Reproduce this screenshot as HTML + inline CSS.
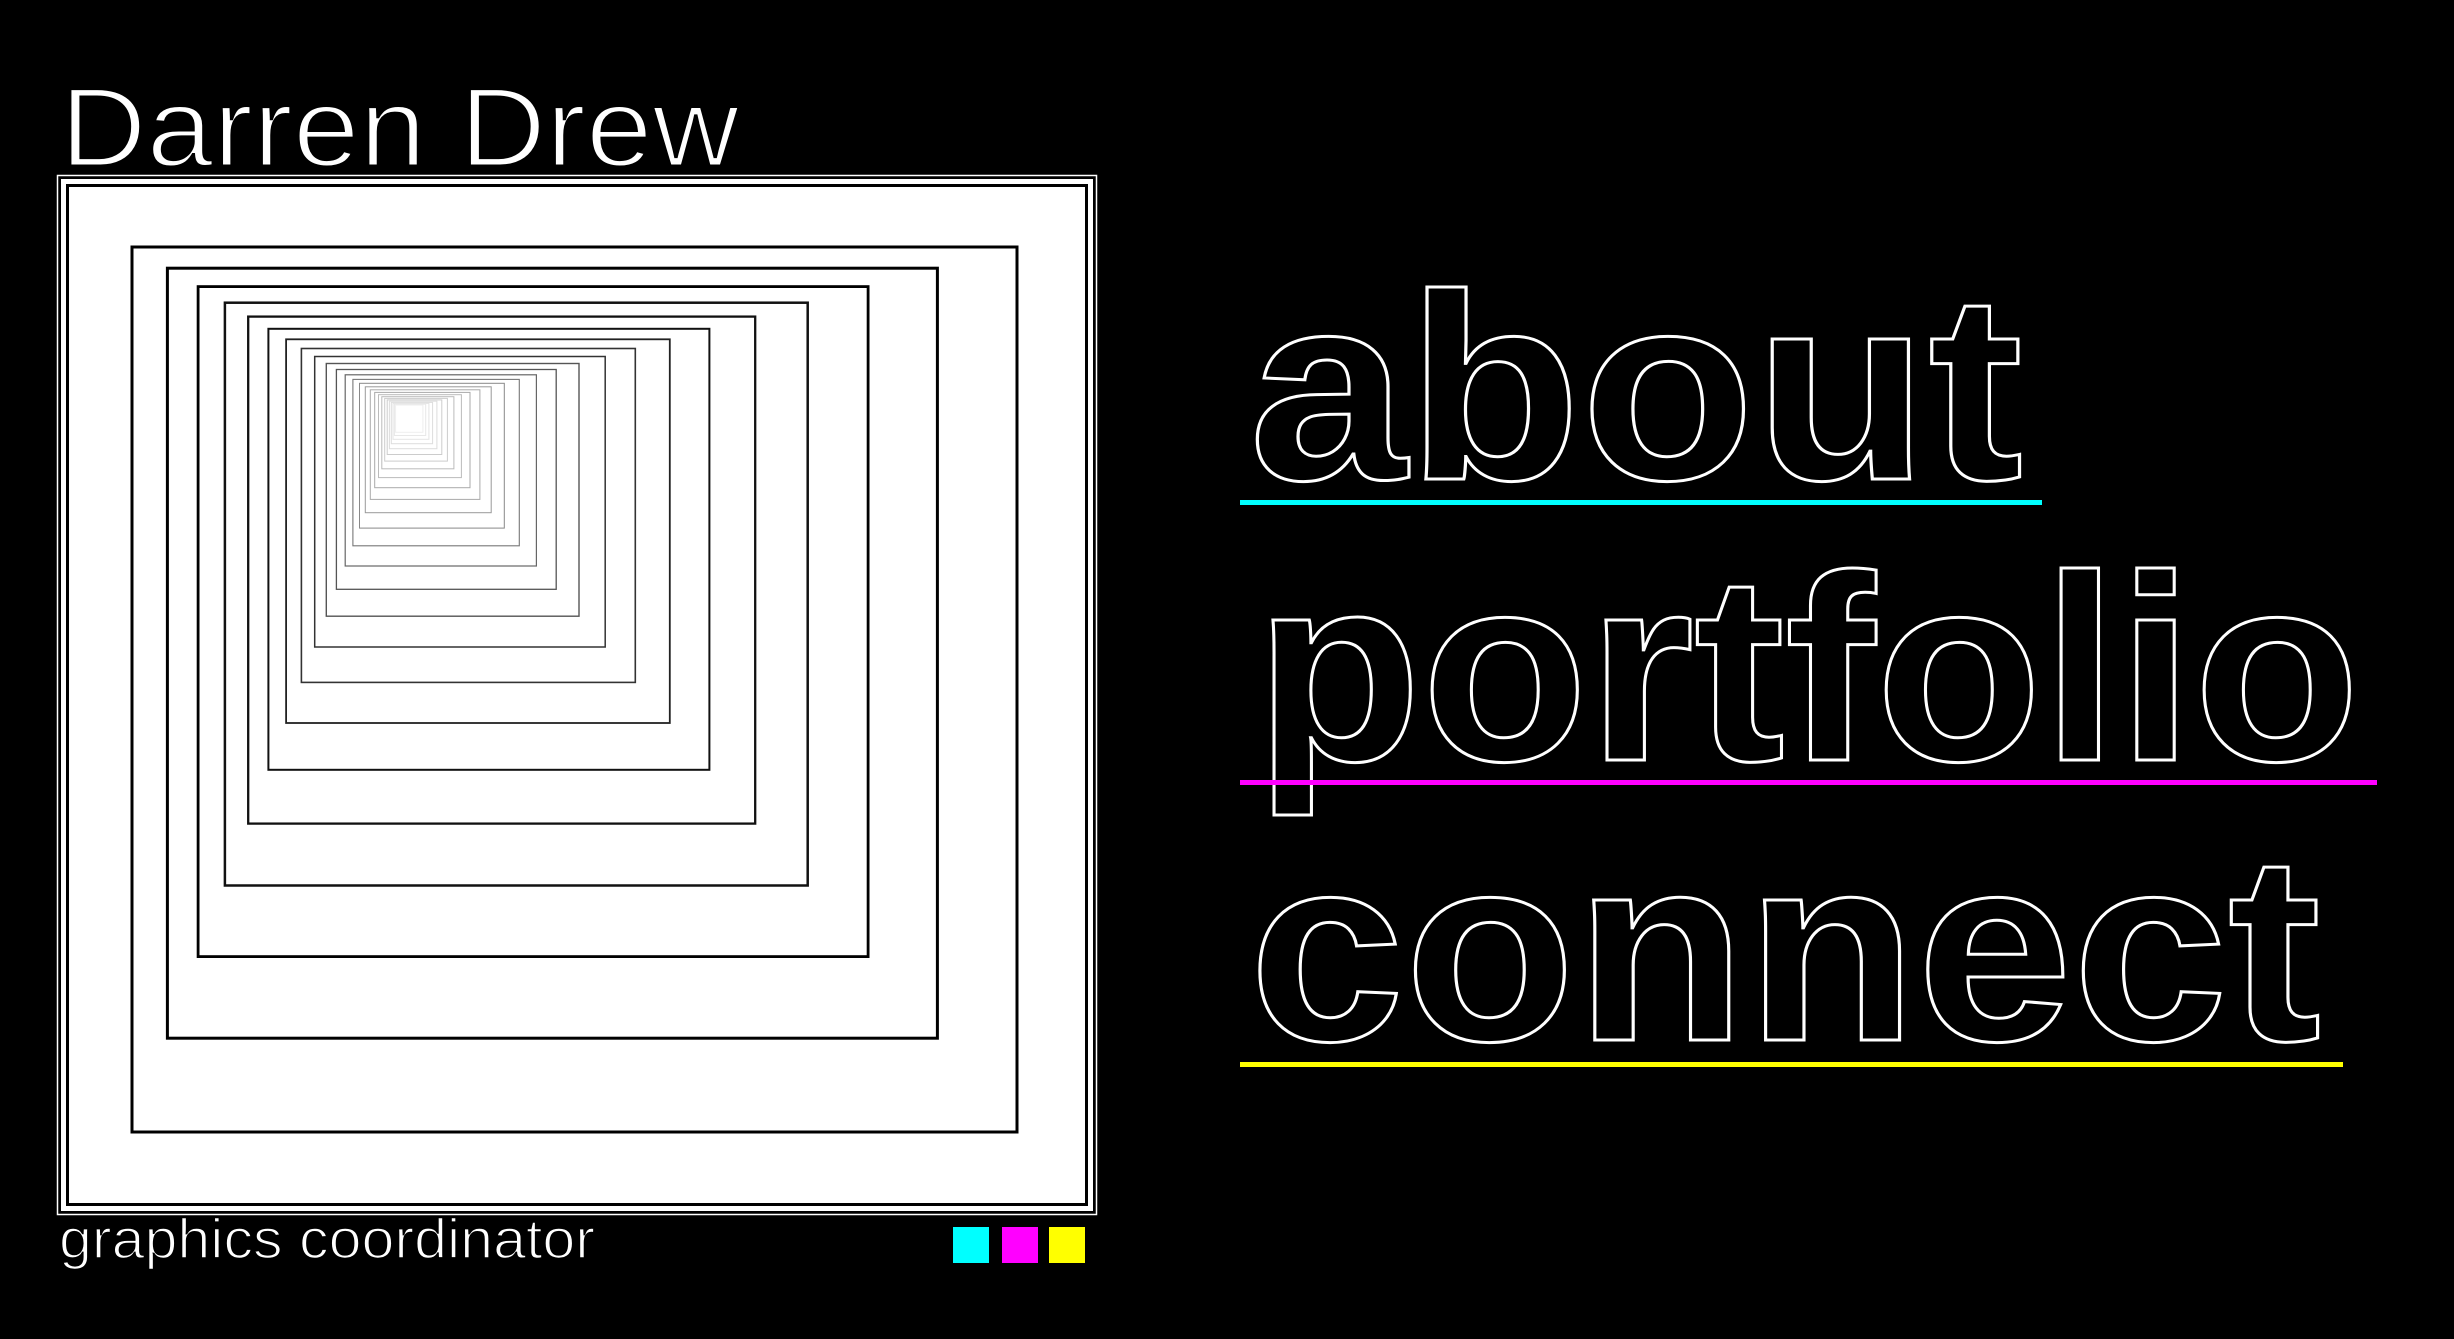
<!DOCTYPE html>
<html><head><meta charset="utf-8"><style>
html,body{margin:0;padding:0;background:#000;width:2454px;height:1339px;overflow:hidden}
svg{display:block}
</style></head><body>
<svg width="2454" height="1339" viewBox="0 0 2454 1339" xmlns="http://www.w3.org/2000/svg">
<rect width="2454" height="1339" fill="#000"/>
<text x="60" y="166" font-family="Liberation Sans, sans-serif" font-size="112" fill="#fff" stroke="#000" stroke-width="3" textLength="679" lengthAdjust="spacingAndGlyphs">Darren Drew</text>
<!-- frame -->
<rect x="57.5" y="175.5" width="1039" height="1039" fill="#000" stroke="#fff" stroke-width="1.5"/>
<rect x="61" y="179" width="1032" height="1032" fill="#fff"/>
<rect x="67.5" y="185.5" width="1019" height="1019" fill="#fff" stroke="#000" stroke-width="3"/>
<g fill="none">
<rect x="132" y="247" width="885" height="885" stroke="#000" stroke-width="3"/>
<rect x="167.4" y="268.2" width="770" height="770" stroke="#000" stroke-width="3"/>
<rect x="198.1" y="286.6" width="670" height="670" stroke="#000" stroke-width="2.8"/>
<rect x="224.9" y="302.7" width="582.8" height="582.8" stroke="#111" stroke-width="2.5"/>
<rect x="248.2" y="316.6" width="507" height="507" stroke="#111" stroke-width="2.3"/>
<rect x="268.4" y="328.8" width="441" height="441" stroke="#111" stroke-width="2"/>
<rect x="286.1" y="339.3" width="383.7" height="383.7" stroke="#222" stroke-width="1.8"/>
<rect x="301.4" y="348.5" width="333.9" height="333.9" stroke="#333" stroke-width="1.6"/>
<rect x="314.7" y="356.5" width="290.5" height="290.5" stroke="#333" stroke-width="1.5"/>
<rect x="326.3" y="363.5" width="252.7" height="252.7" stroke="#555" stroke-width="1.4"/>
<rect x="336.4" y="369.5" width="219.8" height="219.8" stroke="#555" stroke-width="1.3"/>
<rect x="345.2" y="374.8" width="191.2" height="191.2" stroke="#666" stroke-width="1.2"/>
<rect x="352.9" y="379.4" width="166.4" height="166.4" stroke="#777" stroke-width="1.1"/>
<rect x="359.5" y="383.3" width="144.8" height="144.8" stroke="#888" stroke-width="1"/>
<rect x="365.3" y="386.8" width="125.9" height="125.9" stroke="#999" stroke-width="1"/>
<rect x="370.3" y="389.8" width="109.6" height="109.6" stroke="#aaa" stroke-width="1"/>
<rect x="374.7" y="392.4" width="95.3" height="95.3" stroke="#aaa" stroke-width="1"/>
<rect x="378.5" y="394.7" width="82.9" height="82.9" stroke="#bbb" stroke-width="1"/>
<rect x="381.8" y="396.7" width="72.1" height="72.1" stroke="#bbb" stroke-width="1"/>
<rect x="384.7" y="398.4" width="62.7" height="62.7" stroke="#ccc" stroke-width="1"/>
<rect x="387.2" y="399.9" width="54.6" height="54.6" stroke="#ccc" stroke-width="1"/>
<rect x="389.4" y="401.2" width="47.5" height="47.5" stroke="#ddd" stroke-width="1"/>
<rect x="391.3" y="402.4" width="41.3" height="41.3" stroke="#ddd" stroke-width="1"/>
<rect x="393.0" y="403.4" width="35.9" height="35.9" stroke="#e4e4e4" stroke-width="1"/>
<rect x="394.4" y="404.2" width="31.3" height="31.3" stroke="#e8e8e8" stroke-width="1"/>
<rect x="395.6" y="405.0" width="27.3" height="27.3" stroke="#eee" stroke-width="1"/>
</g>
<text x="59" y="1258" font-family="Liberation Sans, sans-serif" font-size="56" fill="#fff" stroke="#000" stroke-width="1.6" textLength="536" lengthAdjust="spacingAndGlyphs">graphics coordinator</text>
<rect x="953" y="1227" width="36" height="36" fill="#00ffff"/>
<rect x="1002" y="1227" width="36" height="36" fill="#ff00ff"/>
<rect x="1049" y="1227" width="36" height="36" fill="#ffff00"/>
<!-- nav -->
<g font-family="Liberation Sans, sans-serif" font-weight="bold" font-size="265" fill="#000" stroke="#fff" stroke-width="3">
<text x="1249" y="479" textLength="774" lengthAdjust="spacingAndGlyphs">about</text>
<text x="1255" y="760" textLength="1105" lengthAdjust="spacingAndGlyphs">portfolio</text>
<text x="1249" y="1040" textLength="1072" lengthAdjust="spacingAndGlyphs">connect</text>
</g>
<rect x="1240" y="500" width="802" height="5" fill="#00ffff"/>
<rect x="1240" y="780" width="1137" height="5" fill="#ff00ff"/>
<rect x="1240" y="1062" width="1103" height="5" fill="#ffff00"/>
</svg>
</body></html>
